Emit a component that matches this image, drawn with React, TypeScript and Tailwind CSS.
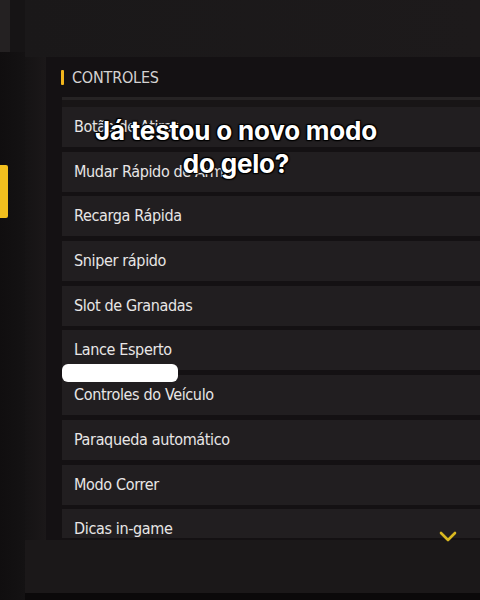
import React from "react";

const rows = [
  "Botão de Atirar",
  "Mudar Rápido de Arma",
  "Recarga Rápida",
  "Sniper rápido",
  "Slot de Granadas",
  "Lance Esperto",
  "Controles do Veículo",
  "Paraqueda automático",
  "Modo Correr",
  "Dicas in-game",
];

const cond = {
  fontFamily: "'DejaVu Sans Condensed', 'DejaVu Sans', sans-serif",
};

export default function App() {
  return (
    <div className="relative w-[480px] h-[600px] overflow-hidden bg-[#1b1819] flex">
      {/* left column */}
      <div className="w-[25px] flex flex-col shrink-0">
        <div className="h-[52px] flex shrink-0">
          <div className="w-[10px] bg-[#242122]" />
          <div className="flex-1 bg-[#161415]" />
        </div>
        <div className="flex-1 bg-gradient-to-r from-[#100e0f] to-[#141213] flex flex-col">
          <div className="h-[113px]" />
          <div className="w-[8px] h-[53px] bg-[#f3c01e] rounded-r-[2px]" />
        </div>
      </div>

      {/* right column */}
      <div className="flex-1 flex flex-col">
        <div className="h-[57px] shrink-0 bg-gradient-to-r from-[#1a1819] to-[#1d1a1b]" />

        <div className="h-[483px] flex shrink-0">
          <div className="w-[21px] bg-gradient-to-r from-[#151314] to-[#1b1819]" />
          <div className="flex-1 bg-[#141113] flex flex-col">
            <div className="h-[40px] flex items-center pl-[15px] gap-[8px] pt-[1px]">
              <div className="w-[3px] h-[15px] bg-[#f2b51c] rounded-[1px]" />
              <span
                className="text-[16px] text-[#d4d2d2] tracking-[-0.2px] font-stretch-condensed"
                style={cond}
              >
                CONTROLES
              </span>
            </div>
            <div className="h-[3px] bg-[#262324] ml-[16px]" />
            <div className="h-[7px] bg-[#181516] ml-[16px]" />
            <div className="flex-1 ml-[16px] overflow-hidden flex flex-col gap-[4.7px] mb-[2px]">
              {rows.map((r) => (
                <div
                  key={r}
                  className="h-[40px] shrink-0 bg-[#211e20] flex items-center pl-[12px]"
                >
                  <span
                    className="text-[16px] text-[#e8e6e6] tracking-[-0.35px] font-stretch-condensed"
                    style={cond}
                  >
                    {r}
                  </span>
                </div>
              ))}
            </div>
          </div>
        </div>

        <div className="h-[53px] bg-[#1b1819] shrink-0" />
        <div className="flex-1 bg-[#0b090a]" />
      </div>

      {/* chevron */}
      <svg
        className="absolute left-[439px] top-[531px]"
        width="18"
        height="12"
        viewBox="0 0 18 12"
      >
        <polyline
          points="2,2 9,9 16,2"
          fill="none"
          stroke="#d9b820"
          strokeWidth="2.6"
          strokeLinecap="round"
          strokeLinejoin="round"
        />
      </svg>

      {/* white censor bar */}
      <div className="absolute left-[62px] top-[364px] w-[116px] h-[18px] bg-white rounded-[6px]" />

      {/* caption */}
      <div
        className="absolute left-0 right-0 top-[114px] ml-[-8px] text-center text-white text-[26px] leading-[33px] font-bold tracking-[-0.2px]"
        style={{
          fontFamily: "Inter, 'Noto Sans', sans-serif",
          textShadow:
            "0 0 2px #000, 1px 1px 1px #000, -1px -1px 1px #000, 1px -1px 1px #000, -1px 1px 1px #000",
        }}
      >
        Já testou o novo modo
        <br />
        do gelo?
      </div>
    </div>
  );
}
